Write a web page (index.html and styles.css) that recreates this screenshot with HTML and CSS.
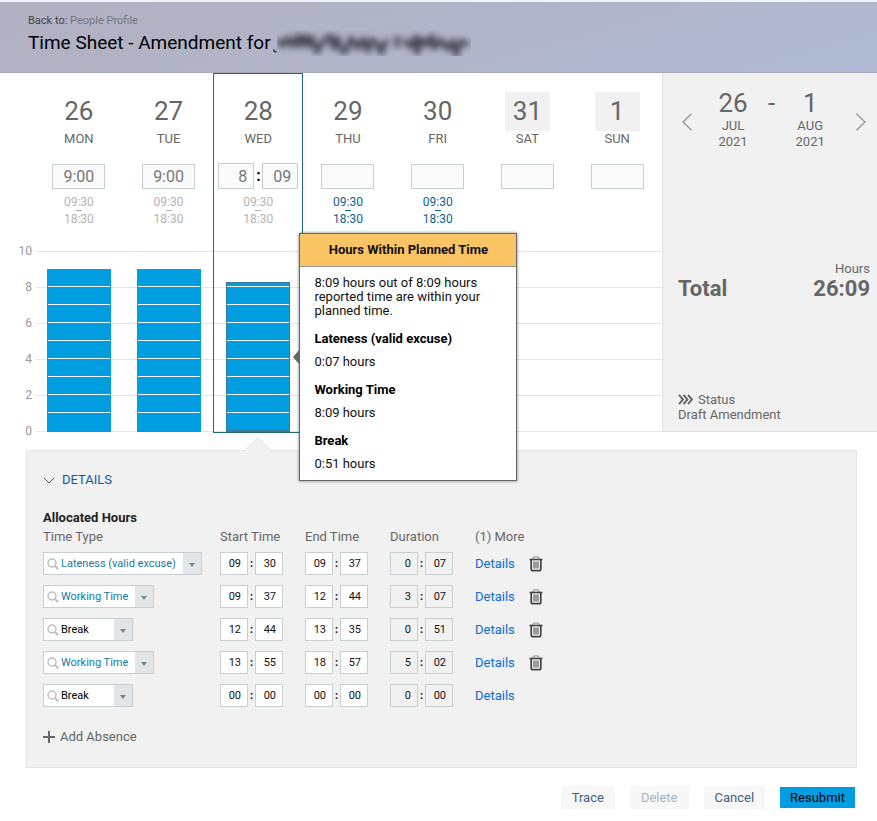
FILE: index.html
```html
<!DOCTYPE html>
<html lang="en">
<head>
<meta charset="utf-8">
<title>Time Sheet - Amendment</title>
<link rel="stylesheet" href="styles.css">
</head>
<body>
<svg class="sprite" aria-hidden="true">
  <symbol id="search" viewBox="0 0 12 12"><circle cx="5" cy="5" r="4" fill="none" stroke="#bdbdbd" stroke-width="1.5"/><path d="M8 8l3.2 3.2" stroke="#bdbdbd" stroke-width="2"/></symbol>
  <symbol id="trash" viewBox="0 0 14 16"><path d="M4 3V2Q4 1 5 1h4q1 0 1 1v1" fill="none" stroke="#888" stroke-width="1"/><path d="M.5 3.500h13" stroke="#444" stroke-width="1.600"/><path d="M2.200 4v9q0 1.700 1.700 1.700h6.200q1.700 0 1.700-1.700V4" fill="none" stroke="#444" stroke-width="1.700"/><path d="M5 5.500v7M7 5.500v7M9 5.500v7" stroke="#555" stroke-width="1.100"/></symbol>
</svg>

<header class="top">
  <p class="crumb">Back to: <a href="#">People Profile</a></p>
  <h1>Time Sheet - Amendment for
    <svg class="redacted" viewBox="0 0 198 32" role="img" aria-label="Hidden name">
      <defs><filter id="soft" x="-10%" y="-30%" width="120%" height="160%"><feGaussianBlur stdDeviation="3"/></filter>
      <clipPath id="box"><rect x="4" y="2" width="194" height="27"/></clipPath></defs>
      <path d="M.8 22.500q0 2.500 2.800 2.200" fill="none" stroke="#333" stroke-width="1.500"/>
      <g clip-path="url(#box)"><g filter="url(#soft)" fill="none" stroke="#454552" stroke-width="5" stroke-linejoin="round">
        <path d="M5 12l4 7l6-8l4 8l6-10l2 10l5-10l3 10l4-9l5 15l7-12l7-4l2 12l5-10l3 12l5 2l5-14l7 10l5-9l5 12l3-11l6 3l4 10l6-14"/>
        <path d="M124 9v12M131 12l6 8l6-10l1 16l5-14l5 6l5-9l2 12l7-8l6 9l6-8l3 14l5-14l8 4"/>
      </g></g>
    </svg>
  </h1>
</header>

<main>
<section class="overview">
  <div class="week">
    <div class="scale" aria-hidden="true">
      <div class="tick"><span>10</span></div>
      <div class="tick"><span>8</span></div>
      <div class="tick"><span>6</span></div>
      <div class="tick"><span>4</span></div>
      <div class="tick"><span>2</span></div>
      <div class="tick last"><span>0</span></div>
    </div>
    <div class="days">
      <article class="day">
        <h2>26</h2><p class="name">MON</p>
        <div class="hours"><input aria-label="Monday hours" value="9:00"></div>
        <p class="plan">09:30<i></i>18:30</p>
        <div class="bar" style="height:163px"></div>
      </article>
      <article class="day">
        <h2>27</h2><p class="name">TUE</p>
        <div class="hours"><input aria-label="Tuesday hours" value="9:00"></div>
        <p class="plan">09:30<i></i>18:30</p>
        <div class="bar" style="height:163px"></div>
      </article>
      <article class="day selected">
        <h2>28</h2><p class="name">WED</p>
        <div class="hours split"><input aria-label="Wednesday hours" value="8"><b>:</b><input aria-label="Wednesday minutes" value="09"></div>
        <p class="plan">09:30<i></i>18:30</p>
        <div class="bar" style="height:150px"></div>
        <aside class="popup" role="tooltip">
          <h3>Hours Within Planned Time</h3>
          <div class="popup-body">
            <p>8:09 hours out of 8:09 hours reported time are within your planned time.</p>
            <dl>
              <dt>Lateness (valid excuse)</dt><dd>0:07 hours</dd>
              <dt>Working Time</dt><dd>8:09 hours</dd>
              <dt>Break</dt><dd>0:51 hours</dd>
            </dl>
          </div>
        </aside>
      </article>
      <article class="day open">
        <h2>29</h2><p class="name">THU</p>
        <div class="hours"><input aria-label="Thursday hours"></div>
        <p class="plan">09:30<i></i>18:30</p>
      </article>
      <article class="day open">
        <h2>30</h2><p class="name">FRI</p>
        <div class="hours"><input aria-label="Friday hours"></div>
        <p class="plan">09:30<i></i>18:30</p>
      </article>
      <article class="day off">
        <h2>31</h2><p class="name">SAT</p>
        <div class="hours"><input aria-label="Saturday hours"></div>
      </article>
      <article class="day off">
        <h2>1</h2><p class="name">SUN</p>
        <div class="hours"><input aria-label="Sunday hours"></div>
      </article>
    </div>
  </div>

  <aside class="summary">
    <div class="range">
      <button class="arrow" aria-label="Previous week"><svg viewBox="0 0 10 18"><path d="M9.500 .7L1 9l8.500 8.300"/></svg></button>
      <div class="dates">
        <div class="date"><strong>26</strong>JUL<br>2021</div>
        <span class="dash">-</span>
        <div class="date"><strong>1</strong>AUG<br>2021</div>
      </div>
      <button class="arrow" aria-label="Next week"><svg viewBox="0 0 10 18"><path d="M.5 .7L9 9L.5 17.300"/></svg></button>
    </div>
    <div class="total">
      <span class="unit">Hours</span>
      <strong>Total</strong><strong>26:09</strong>
    </div>
    <div class="status">
      <p><svg class="steps" viewBox="0 0 15 11"><path d="M1 .8l4 4.700l-4 4.700M5.500 .8l4 4.700l-4 4.700M10 .8l4 4.700l-4 4.700"/></svg>Status</p>
      <p>Draft Amendment</p>
    </div>
  </aside>
</section>

<section class="details">
  <svg class="pointer" viewBox="0 0 30 15" aria-hidden="true"><path d="M0 15L15 .7L30 15z" fill="#f1f1f1"/><path d="M0 14.500L15 .7L30 14.500" fill="none" stroke="#e4e4e4"/></svg>
  <button class="toggle"><svg viewBox="0 0 12 7"><path d="M.8 .8L6 6L11.200 .8"/></svg>DETAILS</button>
  <h2>Allocated Hours</h2>
  <table>
    <thead><tr><th class="type">Time Type</th><th class="time">Start Time</th><th class="time">End Time</th><th class="time">Duration</th><th class="more">(1) More</th><td></td></tr></thead>
    <tbody>
      <tr>
        <td><span class="combo long"><svg><use href="#search"/></svg><select aria-label="Time type"><option>Lateness (valid excuse)</option></select></span></td>
        <td><span class="clock"><input aria-label="Start hour" value="09"><b>:</b><input aria-label="Start minute" value="30"></span></td>
        <td><span class="clock"><input aria-label="End hour" value="09"><b>:</b><input aria-label="End minute" value="37"></span></td>
        <td><span class="clock fixed"><input aria-label="Duration hours" value="0" readonly><b>:</b><input aria-label="Duration minutes" value="07" readonly></span></td>
        <td><a href="#">Details</a></td>
        <td><button class="remove" aria-label="Delete row"><svg><use href="#trash"/></svg></button></td>
      </tr>
      <tr>
        <td><span class="combo medium"><svg><use href="#search"/></svg><select aria-label="Time type"><option>Working Time</option></select></span></td>
        <td><span class="clock"><input aria-label="Start hour" value="09"><b>:</b><input aria-label="Start minute" value="37"></span></td>
        <td><span class="clock"><input aria-label="End hour" value="12"><b>:</b><input aria-label="End minute" value="44"></span></td>
        <td><span class="clock fixed"><input aria-label="Duration hours" value="3" readonly><b>:</b><input aria-label="Duration minutes" value="07" readonly></span></td>
        <td><a href="#">Details</a></td>
        <td><button class="remove" aria-label="Delete row"><svg><use href="#trash"/></svg></button></td>
      </tr>
      <tr>
        <td><span class="combo short"><svg><use href="#search"/></svg><select aria-label="Time type"><option>Break</option></select></span></td>
        <td><span class="clock"><input aria-label="Start hour" value="12"><b>:</b><input aria-label="Start minute" value="44"></span></td>
        <td><span class="clock"><input aria-label="End hour" value="13"><b>:</b><input aria-label="End minute" value="35"></span></td>
        <td><span class="clock fixed"><input aria-label="Duration hours" value="0" readonly><b>:</b><input aria-label="Duration minutes" value="51" readonly></span></td>
        <td><a href="#">Details</a></td>
        <td><button class="remove" aria-label="Delete row"><svg><use href="#trash"/></svg></button></td>
      </tr>
      <tr>
        <td><span class="combo medium"><svg><use href="#search"/></svg><select aria-label="Time type"><option>Working Time</option></select></span></td>
        <td><span class="clock"><input aria-label="Start hour" value="13"><b>:</b><input aria-label="Start minute" value="55"></span></td>
        <td><span class="clock"><input aria-label="End hour" value="18"><b>:</b><input aria-label="End minute" value="57"></span></td>
        <td><span class="clock fixed"><input aria-label="Duration hours" value="5" readonly><b>:</b><input aria-label="Duration minutes" value="02" readonly></span></td>
        <td><a href="#">Details</a></td>
        <td><button class="remove" aria-label="Delete row"><svg><use href="#trash"/></svg></button></td>
      </tr>
      <tr>
        <td><span class="combo short"><svg><use href="#search"/></svg><select aria-label="Time type"><option>Break</option></select></span></td>
        <td><span class="clock"><input aria-label="Start hour" value="00"><b>:</b><input aria-label="Start minute" value="00"></span></td>
        <td><span class="clock"><input aria-label="End hour" value="00"><b>:</b><input aria-label="End minute" value="00"></span></td>
        <td><span class="clock fixed"><input aria-label="Duration hours" value="0" readonly><b>:</b><input aria-label="Duration minutes" value="00" readonly></span></td>
        <td><a href="#">Details</a></td>
        <td></td>
      </tr>
    </tbody>
  </table>
  <button class="add"><svg viewBox="0 0 12 12"><path d="M6 0v12M0 6h12"/></svg>Add Absence</button>
</section>
</main>

<footer class="actions">
  <button>Trace</button>
  <button disabled>Delete</button>
  <button>Cancel</button>
  <button class="primary">Resubmit</button>
</footer>
</body>
</html>
```
FILE: styles.css
```css
* { box-sizing: border-box; }
body { margin: 0; background: #fff; color: #666; font: 13px/16px Roboto, "Liberation Sans", sans-serif; }
h1, h2, h3, p, dl, dd { margin: 0; font-weight: 400; }
button, input, select { font: inherit; color: inherit; margin: 0; border-radius: 0; }
button { border: 0; padding: 0; background: none; cursor: pointer; }
a { text-decoration: none; color: #0a6ed1; }
.sprite { position: absolute; width: 0; height: 0; }

/* Page header */
.top { height: 73px; padding: 11px 28px 0; border-top: 2px solid #f1f5fb; border-bottom: 1px solid #a5a9bc; background: linear-gradient(165deg, #b0b1c1, #b2b5c9 50%, #b0bbd5); }
.crumb { font-size: 11px; line-height: 16px; color: #444; }
.crumb a { color: #75757c; }
h1 { display: flex; align-items: center; gap: 2px; height: 28px; font-size: 19px; line-height: 24px; color: #000; }
.redacted { width: 198px; height: 32px; }

/* Week overview */
.overview { display: flex; }
.week { flex: 1; display: grid; min-width: 0; }
.scale, .days { grid-area: 1 / 1; }
.scale { align-self: end; }
.tick { display: flex; height: 36px; color: #999; font-size: 12px; }
.tick span { width: 32px; margin: -8px 4px 0 0; text-align: right; line-height: 16px; }
.tick::after { content: ""; flex: 1; height: 1px; background: #e2e6e8; }
.tick.last { height: 2px; }
.days { display: grid; grid-template-columns: repeat(7, minmax(0, 1fr)); padding-left: 34px; }
.day { position: relative; display: flex; flex-direction: column; align-items: center; min-height: 360px; padding-top: 18px; border: 1px solid transparent; }
.day.selected { border-color: #1f6b75; }
.day h2 { width: 45px; height: 39px; font-size: 26px; line-height: 38px; text-align: center; }
.off h2 { background: #f1f1f1; }
.name { margin: 0 0 16px; line-height: 16px; }
.hours { display: flex; align-items: center; gap: 2px; height: 26px; margin-bottom: 5px; }
.hours input { width: 53px; height: 25px; padding: 0; border: 1px solid #c8cfd3; background: #fafafa; color: #777; font-size: 16px; text-align: center; }
.hours.split input { width: 36px; height: 26px; padding-right: 6px; text-align: right; }
.hours b { width: 4px; color: #000; font-size: 16px; text-align: center; }
.plan { display: grid; justify-items: center; font-size: 12px; line-height: 16px; color: #b3b3b3; }
.plan i { width: 6px; height: 1px; background: currentColor; }
.open .plan { color: #0d5f94; }
.bar { width: 64px; margin-top: auto; border: 1px solid #009de0; border-bottom-width: 2px; background: repeating-linear-gradient(to top, #009de0 0 17px, #f3faff 17px 18px); }
.selected .bar { border-color: #39789a; }

/* Tooltip */
.popup { position: absolute; z-index: 2; left: 85px; top: 159px; width: 218px; border: 1px solid #666; background: #fff; box-shadow: 0 0 3px rgba(0, 0, 0, .5); color: #111; line-height: 14px; }
.popup::before { content: ""; position: absolute; left: -7px; top: 116px; border: solid transparent; border-width: 7px 6px 7px 0; border-right-color: #666; }
.popup h3 { padding: 8px 0; border-bottom: 1px solid #999; background: #fac364; font-size: 13px; line-height: 16px; font-weight: 700; text-align: center; }
.popup-body { padding: 9px 14px; }
dt { margin: 14px 0 9px; font-weight: 700; color: #000; }

/* Period summary */
.summary { display: flex; flex-direction: column; width: 215px; height: 359px; padding: 16px 7px 9px 15px; border: solid #e2e2e2; border-width: 0 0 1px 1px; background: #f1f1f1; }
.range { display: flex; align-items: flex-start; margin: 0 4px; }
.arrow { height: 66px; }
.arrow svg { display: block; width: 10px; height: 18px; fill: none; stroke: #999; stroke-width: 1.5; }
.dates { display: flex; gap: 10px; margin: 0 auto 0 16px; }
.date { width: 50px; text-align: center; }
.date strong { display: block; font-size: 26px; line-height: 29px; font-weight: 400; }
.dash { font-size: 26px; line-height: 29px; }
.total { display: grid; grid-template-columns: 1fr auto; margin-top: 106px; font-size: 22px; line-height: 24px; }
.unit { grid-column: 1 / 3; text-align: right; font-size: 13px; line-height: 16px; }
.status { margin-top: auto; line-height: 15px; }
.status p { display: flex; align-items: center; gap: 5px; }
.steps { width: 15px; height: 11px; fill: none; stroke: #666; stroke-width: 2; }

/* Details */
.details { position: relative; margin: 17px 20px 0 26px; padding: 20px 16px 21px; border: 1px solid #e4e4e4; background: #f1f1f1; }
.pointer { position: absolute; left: 216px; top: -14px; width: 30px; height: 15px; }
.toggle { display: flex; align-items: center; gap: 7px; line-height: 18px; color: #0d5f94; }
.toggle svg { width: 12px; height: 7px; fill: none; stroke: #555; }
.details h2 { margin-top: 20px; font-size: 13px; line-height: 18px; font-weight: 700; color: #222; }
table { border-collapse: collapse; }
th, td { padding: 0; text-align: left; font-weight: 400; }
th { height: 20px; }
tbody td { height: 33px; }
td > * { vertical-align: middle; }
.type { width: 177px; }
.time { width: 85px; }
.more { width: 54px; white-space: nowrap; }
.combo { position: relative; display: flex; align-items: center; height: 23px; border: 1px solid #c8cfd3; background: linear-gradient(to left, #e1e5e8 18px, #fff 18px); color: #147aa6; font-size: 11px; }
.combo svg { width: 12px; height: 12px; margin-left: 3px; flex: none; }
.combo select { flex: 1; min-width: 0; height: 21px; padding: 0 0 0 2px; border: 0; background: none; appearance: none; }
.combo::after { content: ""; position: absolute; right: 6px; top: 10px; border: 4px solid transparent; border-width: 4px 3px 0; border-top-color: #7b8588; pointer-events: none; }
.long { width: 159px; }
.medium { width: 111px; }
.short { width: 90px; color: #000; }
.clock { display: flex; align-items: center; color: #111; font-size: 11px; }
.clock input { width: 28px; height: 23px; padding: 0 6px 0 0; border: 1px solid #c8cfd3; background: #fff; text-align: right; }
.clock.fixed input { background: #f1f1f1; }
.clock b { width: 7px; text-align: center; }
.remove { display: block; }
.remove svg { display: block; width: 14px; height: 16px; }
.add { display: flex; align-items: center; gap: 5px; margin-top: 16px; line-height: 18px; }
.add svg { width: 12px; height: 12px; stroke: #666; stroke-width: 2; }

/* Footer actions */
.actions { display: flex; justify-content: flex-end; align-items: center; gap: 15px; padding: 18px 22px 12px 26px; }
.actions button { height: 23px; padding: 0 11px; background: #f7f7f7; color: #41607f; }
.actions button:disabled { color: #a6b4c2; }
.actions .primary { height: 21px; padding: 0 10px; background: #009de0; color: #000; }
```
